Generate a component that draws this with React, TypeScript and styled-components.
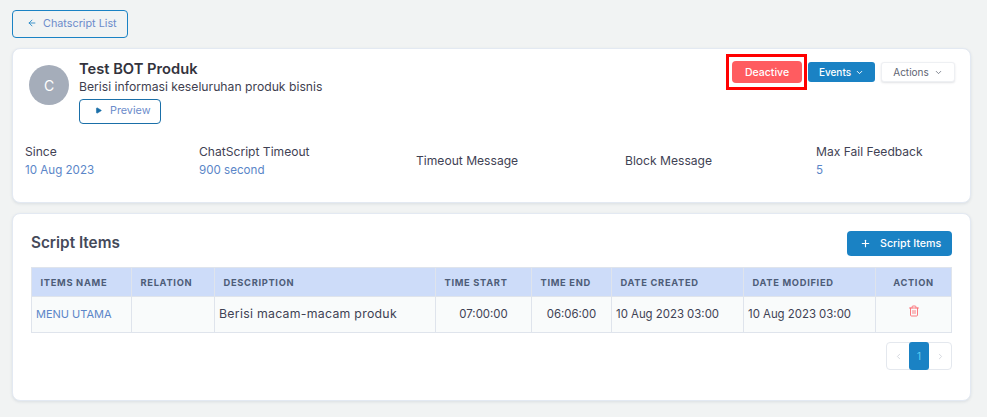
import styled, { createGlobalStyle } from "styled-components";
import { ArrowLeft, ChevronDown, ChevronLeft, ChevronRight, Play, Plus, Trash2 } from "lucide-react";

const stats = [
  { label: "Since", value: "10 Aug 2023" },
  { label: "ChatScript Timeout", value: "900 second" },
  { label: "Timeout Message" },
  { label: "Block Message" },
  { label: "Max Fail Feedback", value: "5" },
];

const columns = [
  { title: "ITEMS NAME", width: 100 },
  { title: "RELATION", width: 83 },
  { title: "DESCRIPTION", width: 221 },
  { title: "TIME START", width: 96 },
  { title: "TIME END", width: 80 },
  { title: "DATE CREATED", width: 132 },
  { title: "DATE MODIFIED", width: 132 },
  { title: "ACTION", width: 76, center: true },
];

export default function App() {
  return (
    <Page>
      <GlobalStyle />
      <BackButton>
        <ArrowLeft size={10} strokeWidth={2} color="#1a82c4" />
        Chatscript List
      </BackButton>

      <Card>
        <CardTop>
          <Avatar>C</Avatar>
          <Intro>
            <Title>Test BOT Produk</Title>
            <Subtitle>Berisi informasi keseluruhan produk bisnis</Subtitle>
            <PreviewButton>
              <Play size={7} fill="#1a6fa8" color="#1a6fa8" />
              Preview
            </PreviewButton>
          </Intro>
          <Toolbar>
            <Highlight>
              <DeactiveButton>Deactive</DeactiveButton>
            </Highlight>
            <EventsButton>
              Events
              <ChevronDown size={9} strokeWidth={2.5} />
            </EventsButton>
            <ActionsButton>
              Actions
              <ChevronDown size={9} strokeWidth={2} />
            </ActionsButton>
          </Toolbar>
        </CardTop>
        <Stats>
          {stats.map((s) => (
            <Stat key={s.label}>
              <StatLabel>{s.label}</StatLabel>
              {s.value && <StatValue>{s.value}</StatValue>}
            </Stat>
          ))}
        </Stats>
      </Card>

      <ItemsCard>
        <ItemsHeader>
          <ItemsTitle>Script Items</ItemsTitle>
          <AddButton>
            <Plus size={11} strokeWidth={2.5} />
            Script Items
          </AddButton>
        </ItemsHeader>
        <Table>
          <colgroup>
            {columns.map((c) => (
              <col key={c.title} width={c.width} />
            ))}
          </colgroup>
          <thead>
            <tr>
              {columns.map((c) => (
                <Th key={c.title} $center={c.center}>
                  {c.title}
                </Th>
              ))}
            </tr>
          </thead>
          <tbody>
            <tr>
              <Td>
                <ItemLink>MENU UTAMA</ItemLink>
              </Td>
              <Td />
              <Td $wide>Berisi macam-macam produk</Td>
              <Td $center>07:00:00</Td>
              <Td $center>06:06:00</Td>
              <Td>10 Aug 2023 03:00</Td>
              <Td>10 Aug 2023 03:00</Td>
              <Td $center>
                <DeleteIcon size={12} color="#fb6b72" strokeWidth={1.8} />
              </Td>
            </tr>
          </tbody>
        </Table>
        <PagerRow>
          <Pager>
            <PageArrow>
              <ChevronLeft size={9} />
            </PageArrow>
            <PageNumber>1</PageNumber>
            <PageArrow>
              <ChevronRight size={9} />
            </PageArrow>
          </Pager>
        </PagerRow>
      </ItemsCard>
    </Page>
  );
}

const GlobalStyle = createGlobalStyle`
  html, body {
    margin: 0;
    background: #f1f3f3;
  }
  * {
    box-sizing: border-box;
  }
  body {
    font-family: Inter, "Open Sans", sans-serif;
    color: #3f4254;
  }
`;

const Page = styled.div`
  width: 987px;
  height: 417px;
  padding: 10px 16px 0 12px;
  overflow: hidden;
`;

const BackButton = styled.button`
  display: flex;
  align-items: center;
  gap: 6px;
  width: 116px;
  height: 28px;
  padding: 0 0 2px 14px;
  background: transparent;
  border: 1px solid #1a82c4;
  border-radius: 4px;
  font: 400 10.8px Inter, sans-serif;
  color: #6c8ccb;
`;

const Card = styled.section`
  height: 155px;
  margin-top: 10px;
  padding: 16px 15px 0 12px;
  background: #fff;
  border: 1px solid #e3e9f2;
  border-radius: 8px;
  box-shadow: 0 1px 3px rgba(60, 80, 110, 0.12);
`;

const CardTop = styled.div`
  display: flex;
  align-items: flex-start;
`;

const Avatar = styled.div`
  display: flex;
  align-items: center;
  justify-content: center;
  width: 40px;
  height: 40px;
  margin: 0 10px 0 4px;
  border-radius: 50%;
  background: #a5adba;
  color: #fff;
  font-size: 14px;
`;

const Intro = styled.div`
  flex: 1;
  margin-top: -5px;
`;

const Title = styled.h1`
  margin: 0;
  font-size: 14.7px;
  line-height: 18px;
  font-weight: 600;
  color: #33333d;
`;

const Subtitle = styled.p`
  margin: 0;
  font-size: 12.2px;
  line-height: 18px;
  color: #3f3f50;
`;

const PreviewButton = styled.button`
  display: flex;
  align-items: center;
  gap: 8px;
  width: 82px;
  height: 25px;
  margin-top: 3px;
  padding: 0 0 2px 15px;
  background: #fff;
  border: 1px solid #1a6fa8;
  border-radius: 4px;
  font: 400 10.8px Inter, sans-serif;
  color: #6c8ccb;
`;

const Toolbar = styled.div`
  display: flex;
  align-items: center;
  gap: 1px;
  margin-top: -11px;
`;

const Highlight = styled.div`
  padding: 4px 2px 4px 3px;
  border: 3px solid #f00;
`;

const DeactiveButton = styled.button`
  display: block;
  width: 70px;
  height: 22px;
  padding: 0;
  background: #ff5c60;
  border: 0;
  border-radius: 4px;
  font: 500 10.5px Inter, sans-serif;
  color: #fff;
`;

const EventsButton = styled.button`
  display: flex;
  align-items: center;
  justify-content: center;
  gap: 4px;
  width: 67px;
  height: 20px;
  padding: 0;
  background: #1a82c4;
  border: 0;
  border-radius: 3px;
  font: 500 10px Inter, sans-serif;
  color: #fff;
`;

const ActionsButton = styled.button`
  display: flex;
  align-items: center;
  justify-content: center;
  gap: 5px;
  width: 74px;
  height: 20px;
  margin-left: 5px;
  padding: 0;
  background: #fff;
  border: 1px solid #eef0f3;
  border-radius: 3px;
  box-shadow: 0 1px 2px rgba(60, 70, 90, 0.15);
  font: 400 10px Inter, sans-serif;
  color: #5e6472;
`;

const Stats = styled.div`
  display: grid;
  grid-template-columns: 174px 217px 209px 191px auto;
  height: 38px;
  margin-top: 18px;
`;

const Stat = styled.div`
  display: flex;
  flex-direction: column;
  justify-content: center;
`;

const StatLabel = styled.div`
  font-size: 12.1px;
  line-height: 18px;
  color: #3f4254;
`;

const StatValue = styled.div`
  font-size: 11.6px;
  line-height: 18px;
  color: #5b86c8;
`;

const ItemsCard = styled.section`
  height: 188px;
  margin-top: 10px;
  padding: 0 18px;
  background: #fff;
  border: 1px solid #e3e9f2;
  border-radius: 8px;
  box-shadow: 0 1px 3px rgba(60, 80, 110, 0.12);
`;

const ItemsHeader = styled.div`
  display: flex;
  align-items: center;
  justify-content: space-between;
  height: 53px;
  padding-top: 5px;
`;

const ItemsTitle = styled.h2`
  margin: 0 0 1px;
  font-size: 15.3px;
  font-weight: 600;
  color: #454a5a;
`;

const AddButton = styled.button`
  display: flex;
  align-items: center;
  gap: 9px;
  width: 105px;
  height: 25px;
  padding: 0 0 0 13px;
  background: #1a82c4;
  border: 0;
  border-radius: 4px;
  font: 500 10.7px Inter, sans-serif;
  color: #fff;
`;

const Table = styled.table`
  width: 920px;
  table-layout: fixed;
  border-collapse: collapse;
`;

const Th = styled.th<{ $center?: boolean }>`
  height: 29px;
  padding: 0 0 0 ${(p) => (p.$center ? "0" : "8.5px")};
  background: #cddcf9;
  border: 1px solid #dfe4ec;
  font-size: 9.3px;
  font-weight: 700;
  letter-spacing: 0.7px;
  text-align: ${(p) => (p.$center ? "center" : "left")};
  color: #4d5d78;
`;

const Td = styled.td<{ $center?: boolean; $wide?: boolean }>`
  height: 36px;
  padding: 0 0 2px ${(p) => (p.$center ? "0" : "4px")};
  background: #f9fbfb;
  border: 1px solid #dfe4ec;
  font-size: ${(p) => (p.$wide ? "12.3px" : "11.4px")};
  letter-spacing: ${(p) => (p.$wide ? "0.28px" : "0")};
  text-align: ${(p) => (p.$center ? "center" : "left")};
  color: #3f4254;
`;

const ItemLink = styled.span`
  font-size: 11px;
  color: #5b86c8;
`;

const DeleteIcon = styled(Trash2)`
  display: inline-block;
  vertical-align: middle;
  margin-bottom: 5px;
`;

const PagerRow = styled.div`
  display: flex;
  justify-content: flex-end;
  margin-top: 9px;
`;

const Pager = styled.div`
  display: flex;
  height: 28px;
  border: 1px solid #e4e8ee;
  border-radius: 4px;
`;

const PageArrow = styled.span`
  display: flex;
  align-items: center;
  justify-content: center;
  width: 22px;
  color: #c8ccd4;
`;

const PageNumber = styled.span`
  display: flex;
  align-items: center;
  justify-content: center;
  width: 20px;
  margin: -1px 0;
  background: #1a82c4;
  border-radius: 3px;
  font-size: 10px;
  color: #5fd0f5;
`;
